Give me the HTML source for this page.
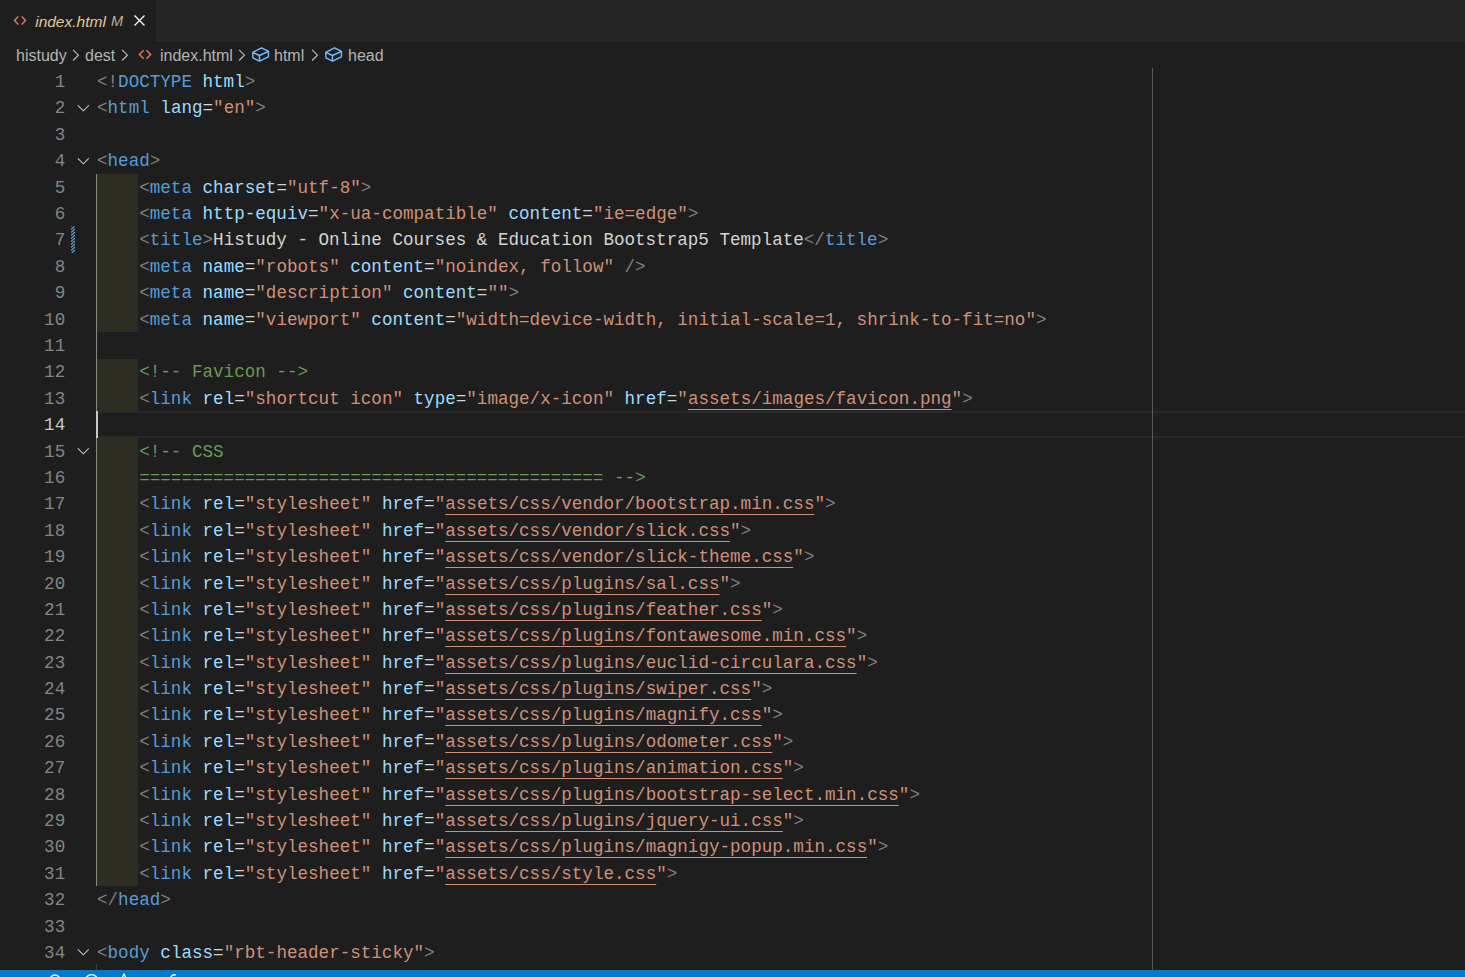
<!DOCTYPE html>
<html><head><meta charset="utf-8">
<style>
html,body{margin:0;padding:0;}
body{width:1465px;height:977px;overflow:hidden;background:#1e1e1e;position:relative;font-family:"Liberation Sans",sans-serif;}
.tabbar{position:absolute;left:0;top:0;width:1465px;height:42px;background:#252526;}
.tab{position:absolute;left:0;top:0;width:156px;height:42px;background:#1e1e1e;}
.tabtitle{position:absolute;left:35.2px;top:13.1px;font-size:15.5px;font-style:italic;color:#e4c995;white-space:pre;}
.tabm{position:absolute;left:111px;top:13.2px;font-size:14.5px;font-style:italic;color:#c2ae86;}
.crumbs{position:absolute;left:0;top:42px;height:26px;width:1465px;}
.cr{position:absolute;top:4.7px;font-size:16px;color:#b4b4b4;white-space:pre;}
.chev{position:absolute;top:49.4px;}
.ln{position:absolute;left:97px;height:26.39px;line-height:26.39px;font-family:"Liberation Mono",monospace;font-size:17.58px;color:#d4d4d4;white-space:pre;}
.num{position:absolute;left:20px;width:45.2px;text-align:right;height:26.39px;line-height:26.39px;font-family:"Liberation Mono",monospace;font-size:17.58px;color:#858585;white-space:pre;}
.num.cur{color:#c6c6c6;}
.b{color:#808080} .t{color:#569cd6} .a{color:#9cdcfe} .e{color:#d4d4d4} .s{color:#ce9178} .u{color:#ce9178;text-decoration:underline;text-underline-offset:5px;} .c{color:#6a9955}
.irb{position:absolute;left:97px;width:41px;background:#2e2d22;}
.fold{position:absolute;left:77px;}
.status{position:absolute;left:0;top:970px;width:1465px;height:7px;background:#007acc;overflow:hidden;}
</style></head>
<body>
<div class="tabbar"><div class="tab">
<svg style="position:absolute;left:13px;top:14px" width="14" height="13" viewBox="0 0 14 13"><path d="M5.3 2.4 L1.5 6.4 L5.3 10.4 M8.7 2.4 L12.5 6.4 L8.7 10.4" fill="none" stroke="#e27758" stroke-width="1.5"/></svg>
<div class="tabtitle">index.html</div>
<div class="tabm">M</div>
<svg style="position:absolute;left:134px;top:15px" width="11" height="11" viewBox="0 0 11 11"><path d="M0.5 0.5 L10.5 10.5 M10.5 0.5 L0.5 10.5" stroke="#ffffff" stroke-width="1.3"/></svg>
</div></div>
<div style="position:absolute;left:0;top:42px;width:1465px;height:1px;background:#1b1b1b;"></div>
<div class="crumbs">
<div class="cr" style="left:16px">histudy</div>
<div class="cr" style="left:85px">dest</div>
<div class="cr" style="left:160px">index.html</div>
<div class="cr" style="left:274px">html</div>
<div class="cr" style="left:348px">head</div>
</div>
<svg class="chev" style="left:72px" width="8" height="12" viewBox="0 0 8 12"><path d="M1.1 0.9 L6.4 6.2 L1.1 11.5" fill="none" stroke="#b8b8b8" stroke-width="1.2"/></svg>
<svg class="chev" style="left:121px" width="8" height="12" viewBox="0 0 8 12"><path d="M1.1 0.9 L6.4 6.2 L1.1 11.5" fill="none" stroke="#b8b8b8" stroke-width="1.2"/></svg>
<svg class="chev" style="left:238px" width="8" height="12" viewBox="0 0 8 12"><path d="M1.1 0.9 L6.4 6.2 L1.1 11.5" fill="none" stroke="#b8b8b8" stroke-width="1.2"/></svg>
<svg class="chev" style="left:311px" width="8" height="12" viewBox="0 0 8 12"><path d="M1.1 0.9 L6.4 6.2 L1.1 11.5" fill="none" stroke="#b8b8b8" stroke-width="1.2"/></svg>
<svg style="position:absolute;left:138px;top:49px" width="14" height="12" viewBox="0 0 14 12"><path d="M5.6 1.3 L1.5 5.5 L5.6 9.7 M8.5 1.3 L12.6 5.5 L8.5 9.7" fill="none" stroke="#e27758" stroke-width="1.5"/></svg>
<svg style="position:absolute;left:251px;top:46px" width="19" height="17" viewBox="0 0 19 17"><path d="M1.8 6.4 L10.5 1.8 L17.5 5.4 L17.4 10.9 L8.5 15.1 L1.9 11.9 Z M1.8 6.4 L8.4 9.5 L17.5 5.4 M8.4 9.5 L8.5 15.1" fill="none" stroke="#75beff" stroke-width="1.4" stroke-linejoin="round"/></svg>
<svg style="position:absolute;left:324px;top:46px" width="19" height="17" viewBox="0 0 19 17"><path d="M1.8 6.4 L10.5 1.8 L17.5 5.4 L17.4 10.9 L8.5 15.1 L1.9 11.9 Z M1.8 6.4 L8.4 9.5 L17.5 5.4 M8.4 9.5 L8.5 15.1" fill="none" stroke="#75beff" stroke-width="1.4" stroke-linejoin="round"/></svg>
<div style="position:absolute;left:97px;top:411.47px;width:1368px;height:26.39px;box-sizing:border-box;border-top:2px solid #292929;border-bottom:2px solid #292929;"></div>
<div class="irb" style="top:173.96px;height:158.34px"></div><div class="irb" style="top:358.69px;height:52.78px"></div><div class="irb" style="top:437.86px;height:448.63px"></div>
<div style="position:absolute;left:96px;top:173.96px;width:1px;height:712.53px;background:#8a8a84;"></div>
<div style="position:absolute;left:96px;top:964px;width:1px;height:6px;background:#404040;"></div>
<div style="position:absolute;left:1152px;top:68px;width:1px;height:902px;background:#5a5a5a;"></div>
<div style="position:absolute;left:96px;top:411.47px;width:2px;height:26.39px;background:#c8c8c8;"></div>
<svg style="position:absolute;left:71px;top:226px" width="4" height="27" viewBox="0 0 4 27"><defs><clipPath id="gc"><rect x="0" y="0" width="4" height="27" rx="1.5"/></clipPath></defs><g clip-path="url(#gc)" stroke="#62a6d0" stroke-width="1.2" fill="none"><path d="M0 0.5 L4 -3.0"/><path d="M0 3.5 L4 0.0"/><path d="M0 6.5 L4 3.0"/><path d="M0 9.5 L4 6.0"/><path d="M0 12.5 L4 9.0"/><path d="M0 15.5 L4 12.0"/><path d="M0 18.5 L4 15.0"/><path d="M0 21.5 L4 18.0"/><path d="M0 24.5 L4 21.0"/><path d="M0 27.5 L4 24.0"/><path d="M0 30.5 L4 27.0"/></g></svg>
<svg class="fold" style="top:101.79px" width="14" height="12" viewBox="0 0 14 12"><path d="M0.8 3.4 L6.3 8.8 L11.8 3.4" fill="none" stroke="#c5c5c5" stroke-width="1.1"/></svg><svg class="fold" style="top:154.57px" width="14" height="12" viewBox="0 0 14 12"><path d="M0.8 3.4 L6.3 8.8 L11.8 3.4" fill="none" stroke="#c5c5c5" stroke-width="1.1"/></svg><svg class="fold" style="top:444.86px" width="14" height="12" viewBox="0 0 14 12"><path d="M0.8 3.4 L6.3 8.8 L11.8 3.4" fill="none" stroke="#c5c5c5" stroke-width="1.1"/></svg><svg class="fold" style="top:946.27px" width="14" height="12" viewBox="0 0 14 12"><path d="M0.8 3.4 L6.3 8.8 L11.8 3.4" fill="none" stroke="#c5c5c5" stroke-width="1.1"/></svg>
<div class="ln" style="top:69.10px"><span class="b">&lt;!</span><span class="t">DOCTYPE</span> <span class="a">html</span><span class="b">&gt;</span></div><div class="num" style="top:69.10px">1</div><div class="ln" style="top:95.49px"><span class="b">&lt;</span><span class="t">html</span> <span class="a">lang</span><span class="e">=</span><span class="s">"en"</span><span class="b">&gt;</span></div><div class="num" style="top:95.49px">2</div><div class="ln" style="top:121.88px"></div><div class="num" style="top:121.88px">3</div><div class="ln" style="top:148.27px"><span class="b">&lt;</span><span class="t">head</span><span class="b">&gt;</span></div><div class="num" style="top:148.27px">4</div><div class="ln" style="top:174.66px">    <span class="b">&lt;</span><span class="t">meta</span> <span class="a">charset</span><span class="e">=</span><span class="s">"utf-8"</span><span class="b">&gt;</span></div><div class="num" style="top:174.66px">5</div><div class="ln" style="top:201.05px">    <span class="b">&lt;</span><span class="t">meta</span> <span class="a">http-equiv</span><span class="e">=</span><span class="s">"x-ua-compatible"</span> <span class="a">content</span><span class="e">=</span><span class="s">"ie=edge"</span><span class="b">&gt;</span></div><div class="num" style="top:201.05px">6</div><div class="ln" style="top:227.44px">    <span class="b">&lt;</span><span class="t">title</span><span class="b">&gt;</span>Histudy - Online Courses &amp; Education Bootstrap5 Template<span class="b">&lt;/</span><span class="t">title</span><span class="b">&gt;</span></div><div class="num" style="top:227.44px">7</div><div class="ln" style="top:253.83px">    <span class="b">&lt;</span><span class="t">meta</span> <span class="a">name</span><span class="e">=</span><span class="s">"robots"</span> <span class="a">content</span><span class="e">=</span><span class="s">"noindex, follow"</span> <span class="b">/&gt;</span></div><div class="num" style="top:253.83px">8</div><div class="ln" style="top:280.22px">    <span class="b">&lt;</span><span class="t">meta</span> <span class="a">name</span><span class="e">=</span><span class="s">"description"</span> <span class="a">content</span><span class="e">=</span><span class="s">""</span><span class="b">&gt;</span></div><div class="num" style="top:280.22px">9</div><div class="ln" style="top:306.61px">    <span class="b">&lt;</span><span class="t">meta</span> <span class="a">name</span><span class="e">=</span><span class="s">"viewport"</span> <span class="a">content</span><span class="e">=</span><span class="s">"width=device-width, initial-scale=1, shrink-to-fit=no"</span><span class="b">&gt;</span></div><div class="num" style="top:306.61px">10</div><div class="ln" style="top:333.00px"></div><div class="num" style="top:333.00px">11</div><div class="ln" style="top:359.39px">    <span class="c">&lt;!-- Favicon --&gt;</span></div><div class="num" style="top:359.39px">12</div><div class="ln" style="top:385.78px">    <span class="b">&lt;</span><span class="t">link</span> <span class="a">rel</span><span class="e">=</span><span class="s">"shortcut icon"</span> <span class="a">type</span><span class="e">=</span><span class="s">"image/x-icon"</span> <span class="a">href</span><span class="e">=</span><span class="s">"</span><span class="u">assets/images/favicon.png</span><span class="s">"</span><span class="b">&gt;</span></div><div class="num" style="top:385.78px">13</div><div class="ln" style="top:412.17px"></div><div class="num cur" style="top:412.17px">14</div><div class="ln" style="top:438.56px">    <span class="c">&lt;!-- CSS</span></div><div class="num" style="top:438.56px">15</div><div class="ln" style="top:464.95px">    <span class="c">============================================ --&gt;</span></div><div class="num" style="top:464.95px">16</div><div class="ln" style="top:491.34px">    <span class="b">&lt;</span><span class="t">link</span> <span class="a">rel</span><span class="e">=</span><span class="s">"stylesheet"</span> <span class="a">href</span><span class="e">=</span><span class="s">"</span><span class="u">assets/css/vendor/bootstrap.min.css</span><span class="s">"</span><span class="b">&gt;</span></div><div class="num" style="top:491.34px">17</div><div class="ln" style="top:517.73px">    <span class="b">&lt;</span><span class="t">link</span> <span class="a">rel</span><span class="e">=</span><span class="s">"stylesheet"</span> <span class="a">href</span><span class="e">=</span><span class="s">"</span><span class="u">assets/css/vendor/slick.css</span><span class="s">"</span><span class="b">&gt;</span></div><div class="num" style="top:517.73px">18</div><div class="ln" style="top:544.12px">    <span class="b">&lt;</span><span class="t">link</span> <span class="a">rel</span><span class="e">=</span><span class="s">"stylesheet"</span> <span class="a">href</span><span class="e">=</span><span class="s">"</span><span class="u">assets/css/vendor/slick-theme.css</span><span class="s">"</span><span class="b">&gt;</span></div><div class="num" style="top:544.12px">19</div><div class="ln" style="top:570.51px">    <span class="b">&lt;</span><span class="t">link</span> <span class="a">rel</span><span class="e">=</span><span class="s">"stylesheet"</span> <span class="a">href</span><span class="e">=</span><span class="s">"</span><span class="u">assets/css/plugins/sal.css</span><span class="s">"</span><span class="b">&gt;</span></div><div class="num" style="top:570.51px">20</div><div class="ln" style="top:596.90px">    <span class="b">&lt;</span><span class="t">link</span> <span class="a">rel</span><span class="e">=</span><span class="s">"stylesheet"</span> <span class="a">href</span><span class="e">=</span><span class="s">"</span><span class="u">assets/css/plugins/feather.css</span><span class="s">"</span><span class="b">&gt;</span></div><div class="num" style="top:596.90px">21</div><div class="ln" style="top:623.29px">    <span class="b">&lt;</span><span class="t">link</span> <span class="a">rel</span><span class="e">=</span><span class="s">"stylesheet"</span> <span class="a">href</span><span class="e">=</span><span class="s">"</span><span class="u">assets/css/plugins/fontawesome.min.css</span><span class="s">"</span><span class="b">&gt;</span></div><div class="num" style="top:623.29px">22</div><div class="ln" style="top:649.68px">    <span class="b">&lt;</span><span class="t">link</span> <span class="a">rel</span><span class="e">=</span><span class="s">"stylesheet"</span> <span class="a">href</span><span class="e">=</span><span class="s">"</span><span class="u">assets/css/plugins/euclid-circulara.css</span><span class="s">"</span><span class="b">&gt;</span></div><div class="num" style="top:649.68px">23</div><div class="ln" style="top:676.07px">    <span class="b">&lt;</span><span class="t">link</span> <span class="a">rel</span><span class="e">=</span><span class="s">"stylesheet"</span> <span class="a">href</span><span class="e">=</span><span class="s">"</span><span class="u">assets/css/plugins/swiper.css</span><span class="s">"</span><span class="b">&gt;</span></div><div class="num" style="top:676.07px">24</div><div class="ln" style="top:702.46px">    <span class="b">&lt;</span><span class="t">link</span> <span class="a">rel</span><span class="e">=</span><span class="s">"stylesheet"</span> <span class="a">href</span><span class="e">=</span><span class="s">"</span><span class="u">assets/css/plugins/magnify.css</span><span class="s">"</span><span class="b">&gt;</span></div><div class="num" style="top:702.46px">25</div><div class="ln" style="top:728.85px">    <span class="b">&lt;</span><span class="t">link</span> <span class="a">rel</span><span class="e">=</span><span class="s">"stylesheet"</span> <span class="a">href</span><span class="e">=</span><span class="s">"</span><span class="u">assets/css/plugins/odometer.css</span><span class="s">"</span><span class="b">&gt;</span></div><div class="num" style="top:728.85px">26</div><div class="ln" style="top:755.24px">    <span class="b">&lt;</span><span class="t">link</span> <span class="a">rel</span><span class="e">=</span><span class="s">"stylesheet"</span> <span class="a">href</span><span class="e">=</span><span class="s">"</span><span class="u">assets/css/plugins/animation.css</span><span class="s">"</span><span class="b">&gt;</span></div><div class="num" style="top:755.24px">27</div><div class="ln" style="top:781.63px">    <span class="b">&lt;</span><span class="t">link</span> <span class="a">rel</span><span class="e">=</span><span class="s">"stylesheet"</span> <span class="a">href</span><span class="e">=</span><span class="s">"</span><span class="u">assets/css/plugins/bootstrap-select.min.css</span><span class="s">"</span><span class="b">&gt;</span></div><div class="num" style="top:781.63px">28</div><div class="ln" style="top:808.02px">    <span class="b">&lt;</span><span class="t">link</span> <span class="a">rel</span><span class="e">=</span><span class="s">"stylesheet"</span> <span class="a">href</span><span class="e">=</span><span class="s">"</span><span class="u">assets/css/plugins/jquery-ui.css</span><span class="s">"</span><span class="b">&gt;</span></div><div class="num" style="top:808.02px">29</div><div class="ln" style="top:834.41px">    <span class="b">&lt;</span><span class="t">link</span> <span class="a">rel</span><span class="e">=</span><span class="s">"stylesheet"</span> <span class="a">href</span><span class="e">=</span><span class="s">"</span><span class="u">assets/css/plugins/magnigy-popup.min.css</span><span class="s">"</span><span class="b">&gt;</span></div><div class="num" style="top:834.41px">30</div><div class="ln" style="top:860.80px">    <span class="b">&lt;</span><span class="t">link</span> <span class="a">rel</span><span class="e">=</span><span class="s">"stylesheet"</span> <span class="a">href</span><span class="e">=</span><span class="s">"</span><span class="u">assets/css/style.css</span><span class="s">"</span><span class="b">&gt;</span></div><div class="num" style="top:860.80px">31</div><div class="ln" style="top:887.19px"><span class="b">&lt;/</span><span class="t">head</span><span class="b">&gt;</span></div><div class="num" style="top:887.19px">32</div><div class="ln" style="top:913.58px"></div><div class="num" style="top:913.58px">33</div><div class="ln" style="top:939.97px"><span class="b">&lt;</span><span class="t">body</span> <span class="a">class</span><span class="e">=</span><span class="s">"rbt-header-sticky"</span><span class="b">&gt;</span></div><div class="num" style="top:939.97px">34</div>
<div class="status">
<svg style="position:absolute;left:49px;top:3px" width="12" height="12" viewBox="0 0 12 12"><circle cx="6" cy="7" r="5" fill="none" stroke="#fff" stroke-width="1.3"/></svg>
<svg style="position:absolute;left:84px;top:3px" width="15" height="15" viewBox="0 0 15 15"><circle cx="7.5" cy="8" r="6.3" fill="none" stroke="#fff" stroke-width="1.3"/></svg>
<svg style="position:absolute;left:117px;top:3px" width="14" height="14" viewBox="0 0 14 14"><path d="M7 1 L13 13 L1 13 Z" fill="none" stroke="#fff" stroke-width="1.3"/></svg>
<svg style="position:absolute;left:166px;top:3px" width="12" height="12" viewBox="0 0 12 12"><path d="M4 8 C4 3, 7 1, 10 2" fill="none" stroke="#fff" stroke-width="1.3"/></svg>
</div>
</body></html>
